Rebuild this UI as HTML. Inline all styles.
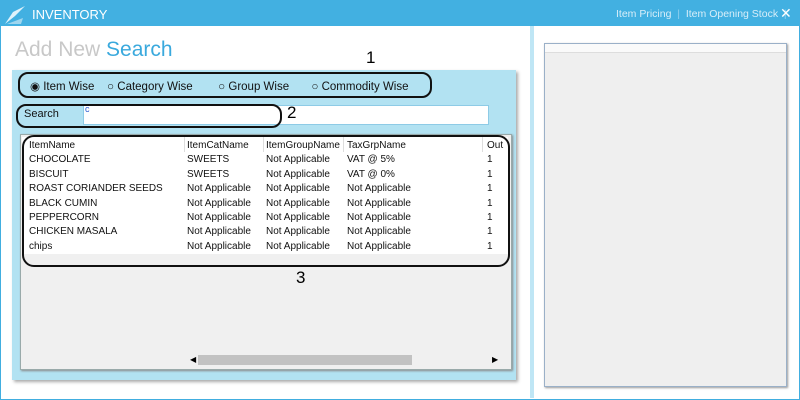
<!DOCTYPE html>
<html><head><style>
body{margin:0;width:800px;height:400px;overflow:hidden;background:#fff;font-family:"Liberation Sans",sans-serif;position:relative}
.a{position:absolute}
.t{font-size:11px;color:#111;white-space:nowrap}
</style></head><body>
<div class="a" style="left:0;top:0;width:798px;height:398px;border:1px solid #41aee0"></div>
<div class="a" style="left:0;top:0;width:800px;height:26px;background:#42b0e1"></div>
<svg class="a" style="left:3px;top:2px" width="24" height="24"><path d="M2 22 L10 10 L22 4 L12 14 Z" fill="#dff2fb"/><path d="M4 22 L20 16 L18 22 Z" fill="#9fd6ef"/></svg>
<div class="a" style="left:32px;top:7px;color:#fff;font-size:13px">INVENTORY</div>
<div class="a" style="left:616px;top:8px;color:#d8eef9;font-size:10.5px">Item Pricing&nbsp;&nbsp;<span style="color:#8fd0ee">|</span>&nbsp;&nbsp;Item Opening Stock&nbsp;&nbsp;<span style="color:#8fd0ee">|</span></div>
<div class="a" style="left:780px;top:5px;color:#fff;font-size:14px">✕</div>
<div class="a" style="left:15px;top:38px;font-size:21px;color:#c8c8c8">Add New <span style="color:#3aa9dd">Search</span></div>
<div class="a" style="left:530px;top:26px;width:4px;height:372px;background:#bfe6f5"></div>
<div class="a" style="left:12px;top:70px;width:504px;height:310px;background:#b2e2f2;box-shadow:2px 2px 3px #aaa"></div>
<div class="a" style="left:366px;top:48px;font-size:17px">1</div>
<div class="a" style="left:18px;top:72px;width:410px;height:22px;border:2px solid #111;border-radius:10px"></div>
<div class="a t" style="left:30px;top:79px;font-size:11.5px">◉ Item Wise&nbsp;&nbsp;&nbsp;&nbsp;○ Category Wise&nbsp;&nbsp;&nbsp;&nbsp;&nbsp;&nbsp;&nbsp;&nbsp;○ Group Wise&nbsp;&nbsp;&nbsp;&nbsp;&nbsp;&nbsp;&nbsp;○ Commodity Wise</div>
<div class="a" style="left:83px;top:105px;width:404px;height:18px;background:#fff;border:1px solid #8ecbe6"></div>
<div class="a" style="left:85px;top:104px;font-size:9px;color:#2a5ad0">c</div>
<div class="a t" style="left:24px;top:108px;font-size:11px">Search</div>
<div class="a" style="left:16px;top:104px;width:262px;height:20px;border:2px solid #111;border-radius:10px"></div>
<div class="a" style="left:287px;top:103px;font-size:17px">2</div>
<div class="a" style="left:20px;top:134px;width:490px;height:234px;background:#f0f0f0;border:1px solid #9aa;box-shadow:1px 1px 2px #888"></div>
<div class="a" style="left:22px;top:137px;width:486px;height:15px;background:#fff;border-bottom:1px solid #ddd"></div>
<div class="a" style="left:22px;top:152px;width:486px;height:102px;background:#fff"></div>
<div class="a t" style="left:29px;top:139px;line-height:14.4px;font-size:10px">ItemName<br>CHOCOLATE<br>BISCUIT<br>ROAST CORIANDER SEEDS<br>BLACK CUMIN<br>PEPPERCORN<br>CHICKEN MASALA<br>chips</div>
<div class="a t" style="left:187px;top:139px;line-height:14.4px;font-size:10px">ItemCatName<br>SWEETS<br>SWEETS<br>Not Applicable<br>Not Applicable<br>Not Applicable<br>Not Applicable<br>Not Applicable</div>
<div class="a t" style="left:266px;top:139px;line-height:14.4px;font-size:10px">ItemGroupName<br>Not Applicable<br>Not Applicable<br>Not Applicable<br>Not Applicable<br>Not Applicable<br>Not Applicable<br>Not Applicable</div>
<div class="a t" style="left:347px;top:139px;line-height:14.4px;font-size:10px">TaxGrpName<br>VAT @ 5%<br>VAT @ 0%<br>Not Applicable<br>Not Applicable<br>Not Applicable<br>Not Applicable<br>Not Applicable</div>
<div class="a t" style="left:487px;top:139px;line-height:14.4px;font-size:10px">Out<br>1<br>1<br>1<br>1<br>1<br>1<br>1</div>
<div class="a" style="left:184px;top:137px;width:1px;height:15px;background:#ddd"></div>
<div class="a" style="left:263px;top:137px;width:1px;height:15px;background:#ddd"></div>
<div class="a" style="left:343px;top:137px;width:1px;height:15px;background:#ddd"></div>
<div class="a" style="left:482px;top:137px;width:1px;height:15px;background:#ddd"></div>
<div class="a" style="left:22px;top:135px;width:484px;height:128px;border:2px solid #111;border-radius:12px"></div>
<div class="a" style="left:296px;top:268px;font-size:17px">3</div>
<div class="a" style="left:190px;top:355px;font-size:8px">◀</div>
<div class="a" style="left:198px;top:355px;width:214px;height:10px;background:#c2c2c2"></div>
<div class="a" style="left:492px;top:355px;font-size:8px">▶</div>
<div class="a" style="left:544px;top:43px;width:241px;height:342px;background:#efefef;border:1px solid #9ab0c8;box-shadow:1px 1px 2px #999"></div>
<div class="a" style="left:545px;top:44px;width:241px;height:8px;background:#fafafa;border-bottom:1px solid #ddd"></div>
</body></html>
